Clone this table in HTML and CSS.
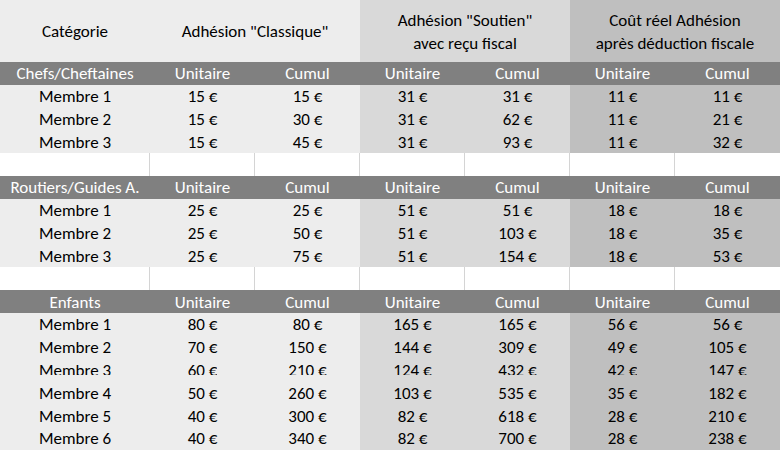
FILE: index.html
```html
<!DOCTYPE html>
<html lang="fr">
<head>
<meta charset="utf-8">
<title>Adhésions</title>
<link rel="stylesheet" href="styles.css">
</head>
<body>
<div class="sheet">
  <div class="title a">Catégorie</div>
  <div class="title a span2">Adhésion "Classique"</div>
  <div class="title b span2">Adhésion "Soutien"<br>avec reçu fiscal</div>
  <div class="title c span2">Coût réel Adhésion<br>après déduction fiscale</div>

  <div class="hd">Chefs/Cheftaines</div><div class="hd">Unitaire</div><div class="hd">Cumul</div><div class="hd">Unitaire</div><div class="hd">Cumul</div><div class="hd">Unitaire</div><div class="hd">Cumul</div>
  <div class="a">Membre 1</div><div class="a">15 €</div><div class="a">15 €</div><div class="b">31 €</div><div class="b">31 €</div><div class="c">11 €</div><div class="c">11 €</div>
  <div class="a">Membre 2</div><div class="a">15 €</div><div class="a">30 €</div><div class="b">31 €</div><div class="b">62 €</div><div class="c">11 €</div><div class="c">21 €</div>
  <div class="a">Membre 3</div><div class="a">15 €</div><div class="a">45 €</div><div class="b">31 €</div><div class="b">93 €</div><div class="c">11 €</div><div class="c">32 €</div>
  <div class="gap"></div><div class="gap"></div><div class="gap"></div><div class="gap"></div><div class="gap"></div><div class="gap"></div><div class="gap last"></div>

  <div class="hd">Routiers/Guides A.</div><div class="hd">Unitaire</div><div class="hd">Cumul</div><div class="hd">Unitaire</div><div class="hd">Cumul</div><div class="hd">Unitaire</div><div class="hd">Cumul</div>
  <div class="a">Membre 1</div><div class="a">25 €</div><div class="a">25 €</div><div class="b">51 €</div><div class="b">51 €</div><div class="c">18 €</div><div class="c">18 €</div>
  <div class="a">Membre 2</div><div class="a">25 €</div><div class="a">50 €</div><div class="b">51 €</div><div class="b">103 €</div><div class="c">18 €</div><div class="c">35 €</div>
  <div class="a">Membre 3</div><div class="a">25 €</div><div class="a">75 €</div><div class="b">51 €</div><div class="b">154 €</div><div class="c">18 €</div><div class="c">53 €</div>
  <div class="gap"></div><div class="gap"></div><div class="gap"></div><div class="gap"></div><div class="gap"></div><div class="gap"></div><div class="gap last"></div>

  <div class="hd">Enfants</div><div class="hd">Unitaire</div><div class="hd">Cumul</div><div class="hd">Unitaire</div><div class="hd">Cumul</div><div class="hd">Unitaire</div><div class="hd">Cumul</div>
  <div class="a">Membre 1</div><div class="a">80 €</div><div class="a">80 €</div><div class="b">165 €</div><div class="b">165 €</div><div class="c">56 €</div><div class="c">56 €</div>
  <div class="a">Membre 2</div><div class="a">70 €</div><div class="a">150 €</div><div class="b">144 €</div><div class="b">309 €</div><div class="c">49 €</div><div class="c">105 €</div>
  <div class="a cut"><span>Membre 3</span></div><div class="a cut"><span>60 €</span></div><div class="a cut"><span>210 €</span></div><div class="b cut"><span>124 €</span></div><div class="b cut"><span>432 €</span></div><div class="c cut"><span>42 €</span></div><div class="c cut"><span>147 €</span></div>
  <div class="a">Membre 4</div><div class="a">50 €</div><div class="a">260 €</div><div class="b">103 €</div><div class="b">535 €</div><div class="c">35 €</div><div class="c">182 €</div>
  <div class="a">Membre 5</div><div class="a">40 €</div><div class="a">300 €</div><div class="b">82 €</div><div class="b">618 €</div><div class="c">28 €</div><div class="c">210 €</div>
  <div class="a">Membre 6</div><div class="a">40 €</div><div class="a">340 €</div><div class="b">82 €</div><div class="b">700 €</div><div class="c">28 €</div><div class="c">238 €</div>
</div>
</body>
</html>
```

FILE: styles.css
```css
html, body {
  margin: 0;
  padding: 0;
  background: #ffffff;
}

.sheet {
  width: 780px;
  display: grid;
  grid-template-columns: 150px repeat(6, 1fr);
  grid-template-rows: 62px;
  grid-auto-rows: 22.82px;
  font-family: Carlito, Calibri, Lato, "Noto Sans", sans-serif;
  font-size: 17px;
  color: #000000;
}

.sheet > div {
  display: flex;
  align-items: center;
  justify-content: center;
  text-align: center;
  white-space: nowrap;
  padding-top: 1px;
  box-sizing: border-box;
}

.title {
  line-height: 23px;
}

.span2 {
  grid-column: span 2;
}

.a { background: #ededed; }
.b { background: #d9d9d9; }
.c { background: #bfbfbf; }

.hd {
  background: #808080;
  color: #ffffff;
}

.gap {
  background: #ffffff;
  border-right: 1px solid #d4d4d4;
}

.gap.last {
  border-right: none;
}

.cut span {
  display: block;
  height: 15px;
  line-height: 22px;
  overflow: hidden;
  align-self: flex-start;
}
```
